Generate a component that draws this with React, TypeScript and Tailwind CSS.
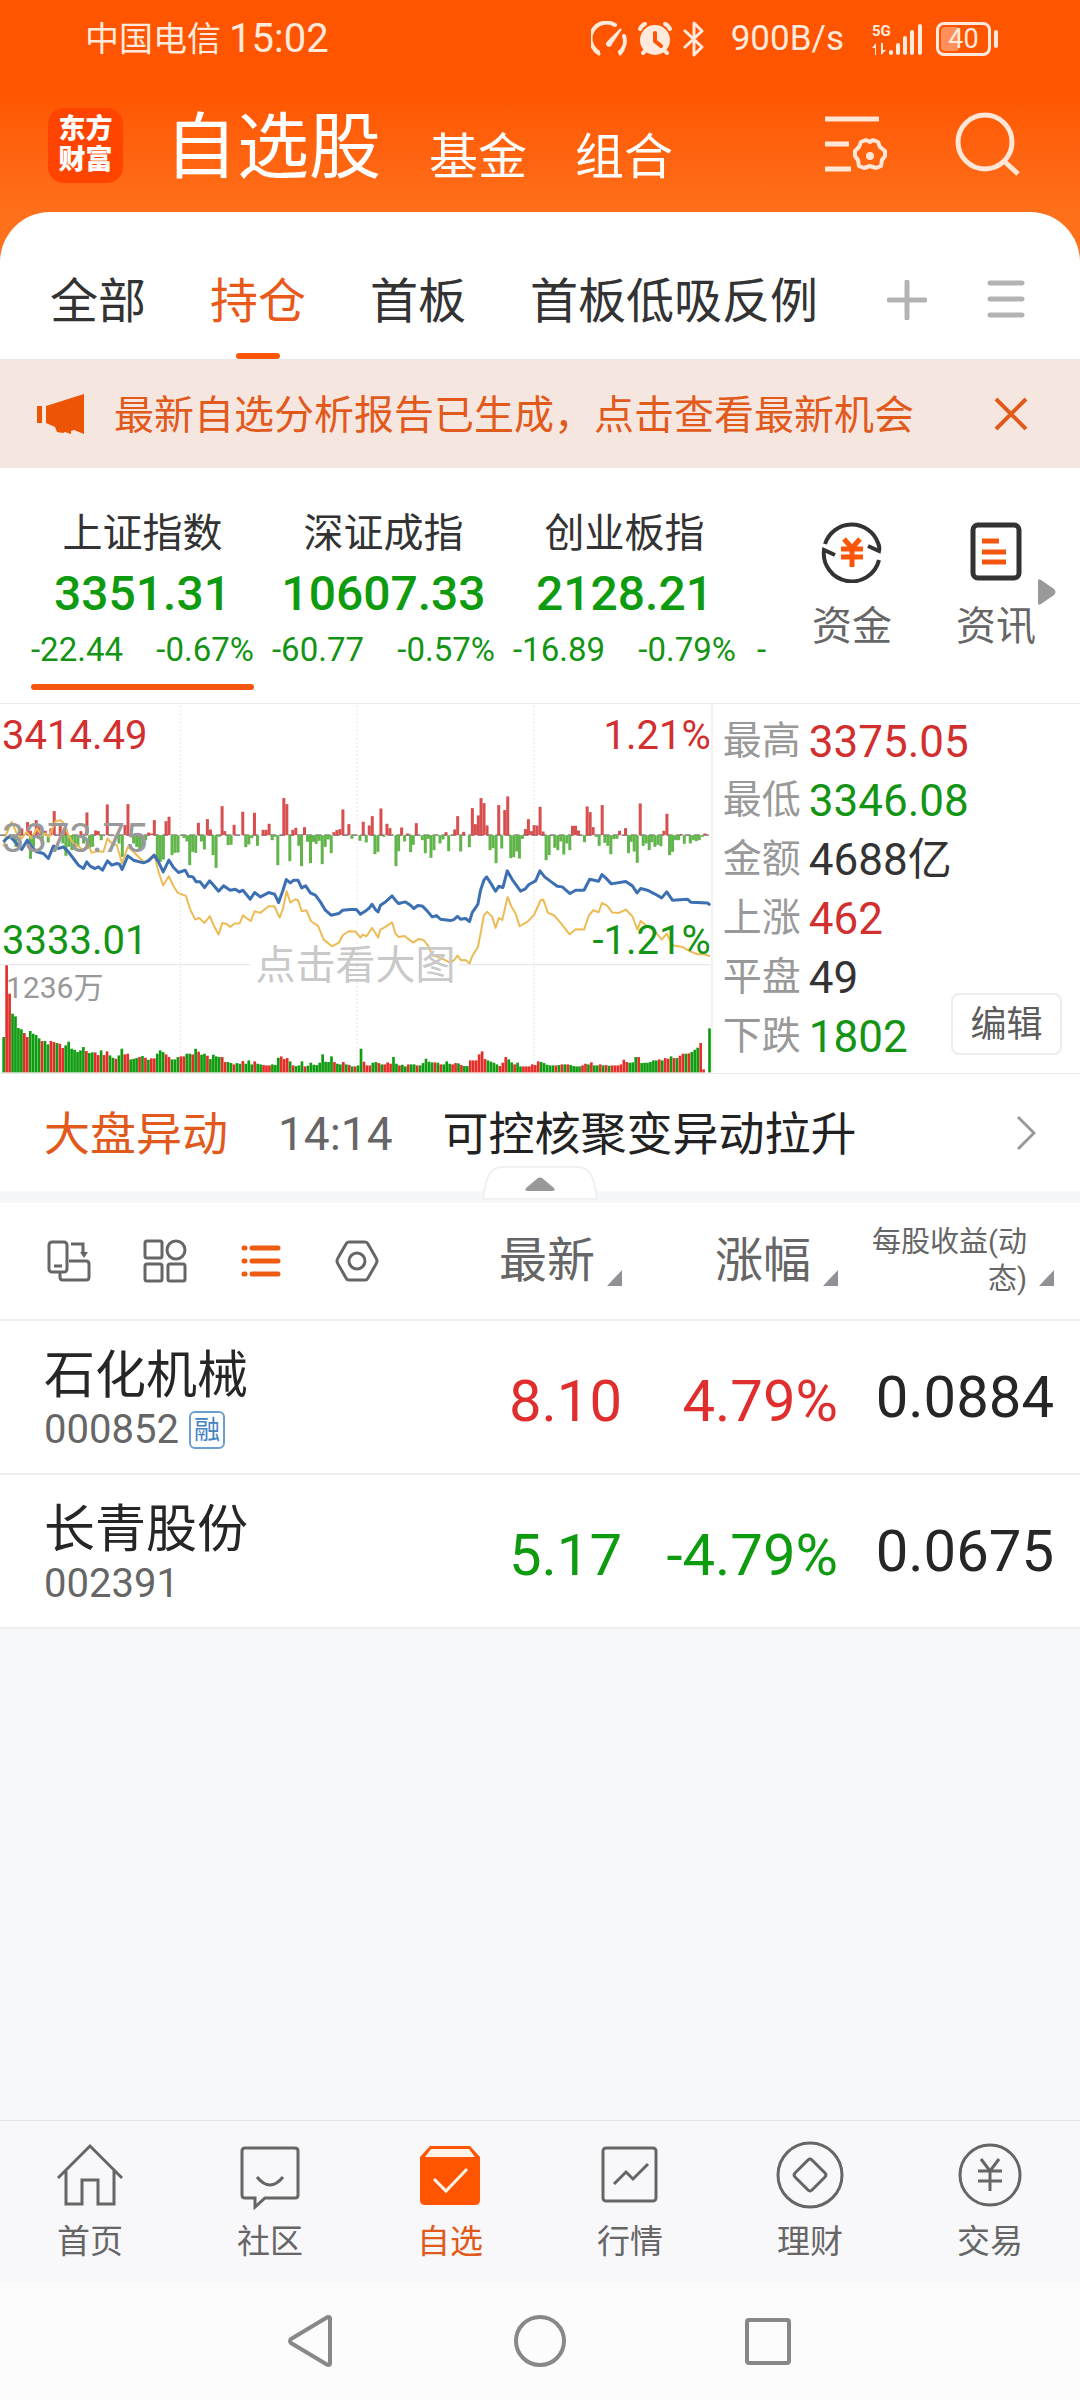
import { ReactNode } from "react";

interface IndexQuote {
    name: string;
    value: string;
    change: string;
    percent: string;
}

interface Stock {
    name: string;
    code: string;
    margin?: boolean;
    price: string;
    percent: string;
    eps: string;
    up: boolean;
}

const groups = ["全部", "持仓", "首板", "首板低吸反例"];

const indices: IndexQuote[] = [
    { name: "上证指数", value: "3351.31", change: "-22.44", percent: "-0.67%" },
    { name: "深证成指", value: "10607.33", change: "-60.77", percent: "-0.57%" },
    { name: "创业板指", value: "2128.21", change: "-16.89", percent: "-0.79%" },
];

const stats = [
    { label: "最高", value: "3375.05", color: "text-[#d22f2f]" },
    { label: "最低", value: "3346.08", color: "text-[#149414]" },
    { label: "金额", value: "4688亿", color: "text-[#333333]" },
    { label: "上涨", value: "462", color: "text-[#d22f2f]" },
    { label: "平盘", value: "49", color: "text-[#333333]" },
    { label: "下跌", value: "1802", color: "text-[#149414]" },
];

const stocks: Stock[] = [
    { name: "石化机械", code: "000852", margin: true, price: "8.10", percent: "4.79%", eps: "0.0884", up: true },
    { name: "长青股份", code: "002391", price: "5.17", percent: "-4.79%", eps: "0.0675", up: false },
];

// Chart units: 2130 wide (240 minutes), zero line at 405, volume baseline at 1116
const indexLine =
    "10,425 20,415 30,408 45,425 65,448 82,420 95,440 110,455 130,460 145,475 160,438 175,445 190,440 205,455 220,475 235,495 250,505 260,485 270,498 285,505 295,500 307,510 322,482 335,495 350,490 358,492 366,508 383,467 400,480 430,488 445,482 462,465 475,485 489,515 506,480 520,502 535,517 555,510 565,528 578,530 588,545 600,545 613,562 628,542 640,555 655,573 670,557 690,570 705,567 718,575 728,570 750,597 763,577 780,590 805,577 823,582 835,607 848,570 858,538 870,548 880,540 893,540 904,563 916,557 930,578 945,585 960,605 975,630 992,645 1015,640 1027,630 1050,628 1068,628 1080,642 1095,632 1105,625 1115,612 1125,628 1133,635 1140,615 1155,605 1175,587 1187,603 1195,610 1215,605 1230,615 1240,625 1252,616 1265,617 1280,632 1295,650 1308,646 1320,657 1350,661 1360,658 1371,648 1380,657 1395,655 1407,664 1415,637 1432,612 1440,570 1450,540 1458,530 1470,548 1485,573 1495,558 1507,562 1520,512 1535,538 1560,573 1573,567 1585,553 1605,542 1618,512 1632,530 1652,545 1670,558 1685,560 1708,580 1725,570 1750,570 1767,537 1794,543 1804,523 1815,533 1832,551 1875,544 1895,557 1909,578 1920,565 1940,570 1960,580 1983,593 1998,575 2015,600 2060,597 2070,606 2120,608 2128,615";

const averageLine =
    "10,440 20,400 35,365 50,400 65,415 80,395 95,415 110,385 125,405 135,400 147,410 165,365 180,360 190,368 205,405 220,430 235,438 250,452 262,430 275,458 290,453 310,455 322,415 335,430 350,435 366,490 383,440 400,455 432,487 463,465 475,515 489,556 506,528 520,558 533,578 557,587 570,628 585,658 597,653 613,668 629,648 640,675 655,703 666,668 680,672 690,680 703,670 718,670 728,645 740,655 752,662 763,633 780,638 805,618 822,618 838,652 848,625 859,573 870,607 885,597 893,600 904,633 918,630 932,663 953,677 970,718 995,738 1015,728 1027,705 1045,693 1065,694 1080,712 1087,703 1098,708 1115,683 1133,712 1140,688 1155,680 1175,666 1185,700 1195,710 1212,707 1238,727 1255,716 1270,720 1285,740 1295,765 1320,772 1348,787 1360,780 1371,766 1382,780 1395,779 1407,790 1415,768 1432,740 1442,690 1450,645 1460,635 1475,650 1485,683 1495,653 1505,660 1521,590 1532,618 1545,640 1557,678 1580,665 1600,645 1620,600 1628,598 1642,638 1660,645 1680,668 1707,702 1725,687 1750,688 1765,645 1778,630 1794,636 1804,608 1820,617 1835,637 1855,638 1875,628 1895,648 1910,688 1920,662 1935,675 1960,690 1983,718 1998,700 2015,735 2045,740 2065,752 2090,762 2110,762 2128,768";

const inflow =
    "65,385 82,366 91,392 108,360 117,378 135,392 152,385 162,333 180,375 197,385 242,393 260,337 286,391 294,393 321,313 374,375 383,312 445,397 454,400 462,360 497,363 506,350 594,368 621,357 630,388 665,318 673,393 701,374 727,335 762,338 788,389 797,389 806,371 850,294 859,312 877,389 886,383 912,381 1000,396 1009,390 1018,387 1027,328 1045,372 1088,365 1106,376 1115,348 1141,325 1159,371 1168,384 1203,382 1221,400 1247,369 1336,396 1362,388 1371,348 1389,395 1415,324 1424,372 1433,346 1441,294 1450,309 1459,376 1494,315 1512,330 1521,289 1574,387 1583,357 1592,393 1600,375 1609,376 1618,320 1627,394 1715,377 1724,377 1733,391 1759,319 1768,336 1777,381 1804,315 1856,392 1874,384 1918,310 1989,392 1998,341 2042,402 2112,400";

const outflow =
    "47,440 91,476 100,440 126,430 144,427 188,430 197,467 206,440 215,450 224,445 233,440 250,430 268,445 277,440 303,420 347,415 356,430 366,470 400,430 409,440 418,450 427,440 436,420 471,480 480,485 489,478 515,465 524,458 533,457 551,414 560,424 568,495 577,455 586,458 603,424 612,448 638,465 647,503 656,410 683,435 692,434 736,441 745,433 754,414 771,437 815,420 824,410 832,495 868,483 895,437 903,498 921,425 930,489 939,425 947,431 956,422 965,492 974,440 983,418 992,459 1054,416 1078,422 1097,427 1123,462 1132,455 1150,410 1186,498 1194,453 1212,424 1230,456 1238,434 1265,420 1274,459 1283,416 1291,473 1300,450 1318,430 1327,418 1344,453 1380,454 1406,441 1468,450 1477,444 1486,489 1503,445 1530,474 1539,471 1548,454 1556,475 1565,416 1636,480 1645,465 1662,443 1671,450 1680,424 1689,463 1698,430 1707,450 1751,426 1786,410 1795,437 1812,428 1821,437 1830,462 1839,417 1848,416 1883,459 1891,425 1900,454 1909,488 1927,437 1936,430 1945,450 1953,426 1962,440 1971,434 1980,438 2006,465 2015,455 2024,420 2033,420 2050,431 2068,430 2077,420 2086,423 2095,420 2104,410";

// One entry per minute: direction and top of the bar
const volume =
    "g1010 r795 r880 g940 g948 g983 g987 r998 r1010 g992 g1000 g1004 g1014 r1022 g1022 g1032 r1022 r1025 g1028 r1030 r1043 g1035 g1024 g1045 g1048 g1055 g1050 g1040 r1052 g1058 g1056 r1056 r1064 g1050 r1064 r1053 g1065 g1072 r1075 g1065 g1045 r1062 r1060 g1077 g1075 g1073 r1070 g1067 r1072 g1078 r1074 r1074 g1060 g1050 g1055 r1062 r1070 g1077 g1077 g1070 r1068 r1068 g1060 g1060 r1062 g1045 r1054 g1063 g1060 r1066 g1076 g1063 g1068 g1070 r1070 r1085 g1085 g1088 r1092 g1088 g1090 r1082 g1090 g1080 g1092 r1083 g1090 g1092 r1094 r1095 r1095 g1092 g1094 g1072 r1068 r1076 r1073 g1083 r1095 g1097 g1095 g1083 r1098 g1096 g1087 g1093 g1094 g1087 g1062 g1084 g1085 g1068 r1085 g1090 g1092 r1085 g1092 r1094 g1098 r1098 g1095 g1045 " +
    "r1084 r1095 r1095 g1087 g1085 r1088 g1092 r1092 r1086 r1090 g1070 g1090 r1095 g1093 g1098 r1092 g1092 g1092 r1095 g1095 g1088 g1075 g1084 g1086 r1086 g1087 r1092 g1092 g1083 g1090 r1092 r1088 g1089 r1094 g1097 g1097 r1080 r1080 r1080 r1062 r1053 r1076 g1080 g1084 g1087 g1092 r1097 r1087 r1070 g1077 g1086 r1092 g1087 g1098 r1098 r1098 r1098 r1092 r1094 r1083 g1085 g1088 g1093 g1095 g1095 r1095 g1094 r1092 g1092 r1092 g1094 g1097 g1098 g1098 r1095 r1090 g1092 r1086 g1095 g1095 r1092 g1095 r1094 g1096 r1095 r1095 r1095 r1092 r1078 r1085 g1087 g1086 g1070 r1070 g1088 g1087 g1087 g1085 g1080 g1080 r1077 g1080 r1073 r1075 g1068 r1073 g1073 r1066 r1060 g1060 r1059 g1055 g1048 g1042 r1028 r1107 r1116 g984";

const volumeBars = volume.split(" ");

function toBars(data: string) {
    return data.split(" ").map((point) => point.split(",").map(Number));
}

function IntradayChart() {
    return (
        <svg viewBox="0 12 2130 1106" className="block w-full h-auto" aria-hidden="true">
            <g stroke="#e4e4e4" strokeWidth="4" strokeDasharray="4 8">
                <path d="M541 18V1116M1070 18V1116M1600 18V1116" />
            </g>
            <path d="M0 793H750M1375 793H2130" stroke="#e8e8e8" strokeWidth="4" />
            <path d="M0 405H2130" stroke="#8a8a8a" strokeWidth="5" strokeDasharray="18 9" />
            {toBars(inflow).map(([x, y]) => (
                <rect key={x} x={x - 4} y={y} width="9" height={405 - y} fill="#d84f4f" />
            ))}
            {toBars(outflow).map(([x, y]) => (
                <rect key={x} x={x - 4} y="405" width="9" height={y - 405} fill="#62b54b" />
            ))}
            {volumeBars.map((bar, i) => {
                const top = Number(bar.slice(1));
                return (
                    <rect
                        key={i}
                        x={7 + i * 8.85}
                        y={top}
                        width="8"
                        height={1116 - top}
                        fill={bar[0] === "r" ? "#e52e2a" : "#109c10"}
                    />
                );
            })}
            <polyline points={averageLine} fill="none" stroke="#edbb55" strokeWidth="6" strokeLinejoin="round" />
            <polyline points={indexLine} fill="none" stroke="#3d70b2" strokeWidth="9" strokeLinejoin="round" />
        </svg>
    );
}

function StatusBar() {
    return (
        <div className="flex items-center h-[78px] pl-[85px] pr-[82px] text-[#ffeadd]">
            <span className="text-[34px]">中国电信</span>
            <span className="text-[40px] ml-2">15:02</span>
            <div className="flex items-center ml-auto">
                <svg width="36" height="36" viewBox="0 0 36 36" fill="none" stroke="currentColor" strokeWidth="4" strokeLinecap="round">
                    <path d="M7 31A15 15 0 0 1 24 4" />
                    <path d="M33 15A15 15 0 0 1 29 31" />
                    <path d="M4 30l4 3M32 29l-3 4" strokeWidth="3" />
                    <path d="M30 8L20 23a2 2 0 1 1-3-2z" fill="currentColor" strokeWidth="2" />
                </svg>
                <svg className="ml-2.5" width="36" height="36" viewBox="0 0 36 36" fill="none" stroke="currentColor" strokeWidth="4" strokeLinecap="round">
                    <circle cx="18" cy="19" r="15" fill="currentColor" stroke="none" />
                    <path d="M3 8q2-4 5-5M33 8q-2-4-5-5M6 32l3-3M30 32l-3-3" />
                    <path d="M18 12v8l6 5" stroke="#ff5500" />
                </svg>
                <svg className="ml-2" width="26" height="36" viewBox="0 0 26 36" fill="none" stroke="currentColor" strokeWidth="3" strokeLinejoin="round">
                    <path d="M3 9l18 17-8 8V2l8 8L3 27" />
                </svg>
                <span className="text-[35px] ml-6">900B/s</span>
                <svg className="ml-7" width="52" height="36" viewBox="0 0 52 36" fill="currentColor">
                    <text x="0" y="15" fontSize="15" fontWeight="700">
                        5G
                    </text>
                    <path d="M4 34V22l-4 5h3v7zM9 22v12l5-5h-3v-7z" />
                    <rect x="17" y="29" width="4" height="5" rx="2" />
                    <rect x="24" y="22" width="4" height="12" rx="2" />
                    <rect x="31" y="15" width="4" height="19" rx="2" />
                    <rect x="38" y="9" width="4" height="25" rx="2" />
                    <rect x="46" y="3" width="4" height="31" rx="2" />
                </svg>
                <div className="flex items-center ml-3">
                    <div className="relative flex items-center justify-center w-[55px] h-[34px] border-[3px] border-current rounded-lg text-[27px] leading-7">
                        <span className="absolute left-0.5 top-0.5 bottom-0.5 w-[18px] rounded-sm bg-white/35" />
                        <span className="relative">40</span>
                    </div>
                    <span className="w-1 h-[18px] ml-[3px] rounded bg-current" />
                </div>
            </div>
        </div>
    );
}

function AppHeader() {
    return (
        <header className="bg-linear-to-b from-[#ff5500] from-25% to-[#ff701a] to-60% text-white">
            <StatusBar />
            <div className="flex items-center h-[134px] pl-12 pr-[60px]">
                <div className="w-[75px] h-[75px] rounded-2xl bg-[#ff4400] flex flex-col items-center justify-center text-[27px] leading-[31px] font-black">
                    <span>东方</span>
                    <span>财富</span>
                </div>
                <nav className="flex items-end ml-[42px] pt-1.5 gap-12 text-[49px] leading-[60px]">
                    <a href="#watchlist" className="text-[72px] leading-[80px]">自选股</a>
                    <a href="#funds">基金</a>
                    <a href="#portfolios">组合</a>
                </nav>
                <button aria-label="设置" className="ml-auto text-[#ffe6d6]">
                    <svg width="66" height="66" viewBox="0 0 66 66" fill="none" stroke="currentColor" strokeWidth="5">
                        <path d="M1 7h54M1 32h24M1 57h26" />
                        <path d="M46 30L49 28l5 2 2 5 5 4v5l-3 4-1 6-5 2-6-2-6 2-5-2-1-6-3-4v-5l4-4 2-5 5-2z" strokeWidth="4" strokeLinejoin="round" />
                        <circle cx="46" cy="44" r="4" fill="currentColor" stroke="none" />
                    </svg>
                </button>
                <button aria-label="搜索" className="ml-16 text-[#ffe6d6]">
                    <svg width="66" height="66" viewBox="0 0 66 66" fill="none" stroke="currentColor" strokeWidth="5">
                        <circle cx="31" cy="30" r="27" />
                        <path d="M50 49l14 13" />
                    </svg>
                </button>
            </div>
            <GroupTabs />
        </header>
    );
}

function GroupTabs() {
    return (
        <div className="flex items-stretch h-[148px] pl-[50px] pr-[55px] pt-7 rounded-t-[50px] bg-white text-[#333333] border-b border-[#e8e8e8]">
            <div className="flex gap-16 text-[48px]">
                {groups.map((group) => {
                    const active = group === "持仓";
                    return (
                        <button key={group} className={`relative pt-1 whitespace-nowrap ${active ? "text-[#e8591a]" : ""}`}>
                            {group}
                            {active && <span className="absolute left-1/2 bottom-0 -ml-[22px] w-11 h-1.5 rounded bg-[#fb560a]" />}
                        </button>
                    );
                })}
            </div>
            <button aria-label="添加分组" className="ml-auto">
                <svg width="40" height="40" viewBox="0 0 40 40" stroke="#b3b3b3" strokeWidth="5" strokeLinecap="round">
                    <path d="M20 2v36M2 20h36" />
                </svg>
            </button>
            <button aria-label="管理分组" className="ml-[60px]">
                <svg width="38" height="40" viewBox="0 0 38 40" stroke="#b3b3b3" strokeWidth="5" strokeLinecap="round">
                    <path d="M3 3h32M3 19h32M3 35h32" />
                </svg>
            </button>
        </div>
    );
}

function ReportBanner() {
    return (
        <div className="flex items-center h-[108px] pl-9 pr-[52px] bg-[#f5e6df] text-[#e2591c]">
            <svg width="50" height="42" viewBox="0 0 50 42" fill="#eb5505">
                <path d="M1 13h5v17H1zM10 13L48 1v40l-10-4-3 1v3l-6-2-2 1-6-1-2-5-9-4z" />
            </svg>
            <a href="#report" className="ml-7 pt-1 text-[40px]">最新自选分析报告已生成，点击查看最新机会</a>
            <button aria-label="关闭" className="ml-auto">
                <svg width="34" height="34" viewBox="0 0 34 34" stroke="currentColor" strokeWidth="4">
                    <path d="M2 2l30 30M32 2L2 32" />
                </svg>
            </button>
        </div>
    );
}

function IndexStrip() {
    return (
        <section className="flex h-[236px] pr-6 border-b border-[#ebebeb]">
            <div className="flex pl-[22px] overflow-hidden">
                {indices.map((item, i) => (
                    <button key={item.name} className="flex flex-col items-center w-[241px] shrink-0 px-[9px] pt-[42px] text-[#149414]">
                        <span className="text-[40px] leading-[48px] text-[#333333]">{item.name}</span>
                        <span className="text-[48px] leading-[56px] mt-2 font-medium text-[#0f9b0f]">{item.value}</span>
                        <span className="flex justify-between w-full mt-2 text-[33px] leading-10">
                            <span>{item.change}</span>
                            <span>{item.percent}</span>
                        </span>
                        {i === 0 && <span className="w-full h-1.5 mt-3.5 rounded bg-[#f4560f]" />}
                    </button>
                ))}
                <span className="pl-3 pt-[162px] text-[33px] leading-10 text-[#149414]">-</span>
            </div>
            <div className="flex ml-auto gap-16 text-[40px] text-[#666666]">
                <button className="flex flex-col items-center pt-[51px]">
                    <svg width="64" height="64" viewBox="0 0 64 64" fill="none" stroke="#333333" strokeWidth="4">
                        <path d="M5 25A28 28 0 0 1 58 24q2 4 1 8l-11-5M59 41A28 28 0 0 1 4 31l11 5" />
                        <path d="M24 20l8 9 8-9M21 30h22M21 38h22M32 29v19" stroke="#fb560a" strokeWidth="5" />
                    </svg>
                    <span className="mt-4 leading-[56px]">资金</span>
                </button>
                <button className="relative flex flex-col items-center pt-[51px] pr-5">
                    <svg width="64" height="64" viewBox="0 0 64 64" fill="none" stroke="#333333" strokeWidth="5">
                        <rect x="9" y="6" width="46" height="53" rx="5" />
                        <path d="M18 22h17M18 33h24M18 43h24" stroke="#f4560f" />
                    </svg>
                    <span className="mt-4 leading-[56px]">资讯</span>
                    <svg className="absolute right-0 top-[110px]" width="18" height="28" viewBox="0 0 18 28" fill="#999999">
                        <path d="M0 3q0-3 3-1l13 9q3 3 0 6L3 26q-3 2-3-1z" />
                    </svg>
                </button>
            </div>
        </section>
    );
}

function MarketPanel() {
    return (
        <section className="flex border-b border-[#ebebeb]">
            <a href="#chart" className="relative w-[66%] border-r-2 border-[#f2f2f2] text-[40px] leading-10">
                <span className="absolute left-0.5 top-[115px] text-[#999999]">3373.75</span>
                <span className="absolute left-1/2 top-[242px] -translate-x-1/2 whitespace-nowrap text-[#c9c9c9]">点击看大图</span>
                <IntradayChart />
                <span className="absolute left-0.5 top-[12px] text-[#d22f2f]">3414.49</span>
                <span className="absolute left-0.5 top-[217px] text-[#149414]">3333.01</span>
                <span className="absolute right-0 top-[12px] text-[#d22f2f]">1.21%</span>
                <span className="absolute right-0 top-[217px] text-[#149414]">-1.21%</span>
                <span className="absolute left-1.5 top-[264px] text-[30px] text-[#999999]">1236万</span>
            </a>
            <div className="relative flex-1 pl-2.5 pt-2">
                <dl>
                    {stats.map((item) => (
                        <div key={item.label} className="flex items-center h-[59px]">
                            <dt className="text-[39px] text-[#999999]">{item.label}</dt>
                            <dd className={`ml-2 text-[44px] ${item.color}`}>{item.value}</dd>
                        </div>
                    ))}
                </dl>
                <button className="absolute right-[18px] bottom-[18px] w-[111px] h-[62px] pt-0.5 border-2 border-[#ededed] rounded-lg bg-white text-[36px] leading-[56px] text-[#5c5c5c]">
                    编辑
                </button>
            </div>
        </section>
    );
}

function MarketAlert() {
    return (
        <section className="relative flex items-center h-[129px] px-11 border-b-[12px] border-[#f5f7f9] text-[46px]">
            <span className="pt-1 text-[#e2591c]">大盘异动</span>
            <time className="ml-[50px] pt-1 text-[#666666]">14:14</time>
            <a href="#alert" className="ml-[50px] pt-1 text-[#222222]">可控核聚变异动拉升</a>
            <svg className="ml-auto" width="20" height="36" viewBox="0 0 20 36" fill="none" stroke="#999999" strokeWidth="3">
                <path d="M2 2l16 16L2 34" />
            </svg>
            <button aria-label="收起" className="absolute left-1/2 -bottom-[9px] -translate-x-1/2">
                <svg width="116" height="34" viewBox="0 0 116 34" className="block">
                    <path d="M1 33Q3 16 7 9Q11 1 20 1H96Q105 1 109 9Q113 16 115 33z" fill="#ffffff" stroke="#eff1f3" strokeWidth="2" />
                    <path d="M46 25q-4 0-2-3l12-10q2-1 4 0l12 10q2 3-2 3z" fill="#999999" />
                </svg>
            </button>
        </section>
    );
}

function SortHeader({ children, small }: { children: ReactNode; small?: boolean }) {
    return (
        <button className="flex items-center justify-end w-full h-[116px] text-[#666666]">
            <span className={small ? "w-[160px] text-right text-[29px] leading-[37px]" : "text-[48px]"}>{children}</span>
            <svg className="ml-3 mt-[34px]" width="15" height="16" viewBox="0 0 15 16" fill="#8f9196">
                <path d="M15 0v16H0z" />
            </svg>
        </button>
    );
}

function ViewButtons() {
    return (
        <div className="flex gap-[52px]">
            <button aria-label="横屏">
                <svg width="44" height="44" viewBox="0 0 44 44" fill="none" stroke="#666666" strokeWidth="3">
                    <rect x="2" y="3" width="18" height="30" rx="3" />
                    <path d="M7 27h8M24 5h12v9M13 34v4q0 3 3 3h23q3 0 3-3V25q0-3-3-3H22" />
                    <path d="M33 13h8l-4 6z" fill="#666666" stroke="none" />
                </svg>
            </button>
            <button aria-label="宫格">
                <svg width="44" height="44" viewBox="0 0 44 44" fill="none" stroke="#666666" strokeWidth="3">
                    <rect x="2" y="2" width="17" height="17" rx="2" />
                    <circle cx="33" cy="11" r="9" />
                    <rect x="2" y="25" width="17" height="17" rx="2" />
                    <rect x="25" y="25" width="17" height="17" rx="2" />
                </svg>
            </button>
            <button aria-label="列表">
                <svg width="44" height="44" viewBox="0 0 44 44" stroke="#ee5c14" strokeWidth="5" strokeLinecap="round">
                    <path d="M5 9h1M13 9h26M5 22h1M13 22h26M5 35h1M13 35h26" />
                </svg>
            </button>
            <button aria-label="表头设置">
                <svg width="44" height="44" viewBox="0 0 44 44" fill="none" stroke="#666666" strokeWidth="3">
                    <path d="M14 3h16q2 0 3 2l8 14q2 3 0 6l-8 14q-1 2-3 2H14q-2 0-3-2L3 25q-2-3 0-6l8-14q1-2 3-2z" />
                    <circle cx="22" cy="22" r="8" />
                </svg>
            </button>
        </div>
    );
}

function StockTable() {
    return (
        <table className="w-full table-fixed bg-white">
            <thead>
                <tr className="border-b-2 border-[#eeeeee]">
                    <th className="pl-[47px] font-normal" scope="col">
                        <ViewButtons />
                    </th>
                    <th className="w-[214px] p-0 font-normal" scope="col">
                        <SortHeader>最新</SortHeader>
                    </th>
                    <th className="w-[216px] p-0 font-normal" scope="col">
                        <SortHeader>涨幅</SortHeader>
                    </th>
                    <th className="w-[242px] p-0 pr-[26px] font-normal" scope="col">
                        <SortHeader small>每股收益(动态)</SortHeader>
                    </th>
                </tr>
            </thead>
            <tbody>
                {stocks.map((stock) => {
                    const color = stock.up ? "text-[#e02d2d]" : "text-[#0f9b0f]";
                    return (
                        <tr key={stock.code} className="h-[154px] border-b-2 border-[#eeeeee] text-[58px] leading-[72px] text-right">
                            <td className="pl-11 pt-1.5 text-left">
                                <div className="text-[51px] leading-[60px] text-[#262626]">{stock.name}</div>
                                <div className="flex items-center h-12 text-[40px] text-[#666666]">
                                    {stock.code}
                                    {stock.margin && (
                                        <span className="ml-2.5 w-9 h-[38px] border-2 border-[#6aa0d0] rounded-md text-center text-[26px] leading-[34px] text-[#4482c2]">
                                            融
                                        </span>
                                    )}
                                </div>
                            </td>
                            <td className={`pt-2 ${color}`}>{stock.price}</td>
                            <td className={`pt-2 ${color}`}>{stock.percent}</td>
                            <td className="pr-[26px] text-[#262626]">{stock.eps}</td>
                        </tr>
                    );
                })}
            </tbody>
        </table>
    );
}

function NavItem({ label, active, children }: { label: string; active?: boolean; children: ReactNode }) {
    return (
        <a href={`#${label}`} className={`flex-1 flex flex-col items-center pt-[19px] ${active ? "text-[#e2591c]" : "text-[#666666]"}`}>
            <svg width="70" height="70" viewBox="0 0 70 70" fill="none" stroke="currentColor" strokeWidth="3">
                {children}
            </svg>
            <span className="mt-2.5 text-[33px] leading-[44px]">{label}</span>
        </a>
    );
}

function BottomNav() {
    return (
        <nav className="flex h-[162px] border-t border-[#e3e4e6] bg-[#f8f8fa]">
            <NavItem label="首页">
                <path d="M3 38L35 6l32 32M11 31v33h16V40h16v24h16V31" />
            </NavItem>
            <NavItem label="社区">
                <path d="M10 8h50q3 0 3 3v44q0 3-3 3H30l-10 9v-9H10q-3 0-3-3V11q0-3 3-3z" />
                <path d="M22 37q13 16 26 0" />
            </NavItem>
            <NavItem label="自选" active>
                <path d="M15 6h40l10 11v43q0 5-5 5H10q-5 0-5-5V17z" fill="#ff5500" stroke="none" />
                <path d="M16 9h38l6 8H10z" fill="#fff3ea" stroke="none" />
                <path d="M19 39l12 12 21-22" stroke="#fff3ea" />
            </NavItem>
            <NavItem label="行情">
                <rect x="8" y="8" width="53" height="53" rx="3" />
                <path d="M19 44l12-12 7 7 15-15" />
            </NavItem>
            <NavItem label="理财">
                <circle cx="35" cy="35" r="32" />
                <path d="M33 20q2-2 4 0l13 13q2 2 0 4L37 50q-2 2-4 0L20 37q-2-2 0-4z" />
            </NavItem>
            <NavItem label="交易">
                <circle cx="35" cy="35" r="30" />
                <path d="M26 19l9 12 9-12M23 31h24M23 41h24M35 31v20" />
            </NavItem>
        </nav>
    );
}

function SystemBar() {
    return (
        <div className="flex items-center justify-center h-[118px] gap-[176px] bg-[#fcfcfc]">
            <button aria-label="返回">
                <svg width="52" height="52" viewBox="0 0 52 52" fill="none" stroke="#888888" strokeWidth="4" strokeLinejoin="round">
                    <path d="M44 3v46q-1 2-4 0L5 28q-2-2 0-4L40 3q3-2 4 0z" />
                </svg>
            </button>
            <button aria-label="主屏幕">
                <svg width="52" height="52" viewBox="0 0 52 52" fill="none" stroke="#888888" strokeWidth="4">
                    <circle cx="26" cy="26" r="24" />
                </svg>
            </button>
            <button aria-label="最近任务">
                <svg width="52" height="52" viewBox="0 0 52 52" fill="none" stroke="#888888" strokeWidth="4">
                    <rect x="5" y="5" width="42" height="43" rx="2" />
                </svg>
            </button>
        </div>
    );
}

export default function App() {
    return (
        <div className="flex flex-col min-h-screen bg-[#f7f8fa] font-['Roboto','Noto_Sans_CJK_SC',sans-serif]">
            <AppHeader />
            <main className="flex-1">
                <ReportBanner />
                <div className="bg-white">
                    <IndexStrip />
                    <MarketPanel />
                    <MarketAlert />
                    <StockTable />
                </div>
            </main>
            <BottomNav />
            <SystemBar />
        </div>
    );
}
